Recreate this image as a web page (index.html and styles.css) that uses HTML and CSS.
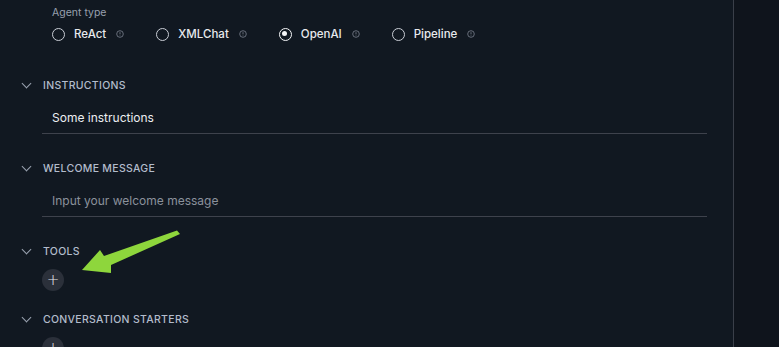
FILE: index.html
```html
<!DOCTYPE html>
<html lang="en">
  <head>
    <meta charset="UTF-8" />
    <meta name="viewport" content="width=device-width, initial-scale=1.0" />
    <title>Agent config</title>
    <link rel="stylesheet" href="styles.css">
  </head>

  <body>
    <div class="page">
      <main class="config">
        <div class="agent-type">
          <p class="field-label">Agent type</p>
          <div class="radios">
            <label class="radio">
              <span class="dot"></span>
              <span class="radio-name">ReAct</span>
              <svg class="info" viewBox="0 0 8 8"><circle cx="4" cy="4" r="3.3" /><line x1="4" y1="2.2" x2="4" y2="4.4" /><line x1="4" y1="5.3" x2="4" y2="5.8" /></svg>
            </label>
            <label class="radio">
              <span class="dot"></span>
              <span class="radio-name">XMLChat</span>
              <svg class="info" viewBox="0 0 8 8"><circle cx="4" cy="4" r="3.3" /><line x1="4" y1="2.2" x2="4" y2="4.4" /><line x1="4" y1="5.3" x2="4" y2="5.8" /></svg>
            </label>
            <label class="radio checked">
              <span class="dot"></span>
              <span class="radio-name">OpenAI</span>
              <svg class="info" viewBox="0 0 8 8"><circle cx="4" cy="4" r="3.3" /><line x1="4" y1="2.2" x2="4" y2="4.4" /><line x1="4" y1="5.3" x2="4" y2="5.8" /></svg>
            </label>
            <label class="radio">
              <span class="dot"></span>
              <span class="radio-name">Pipeline</span>
              <svg class="info" viewBox="0 0 8 8"><circle cx="4" cy="4" r="3.3" /><line x1="4" y1="2.2" x2="4" y2="4.4" /><line x1="4" y1="5.3" x2="4" y2="5.8" /></svg>
            </label>
          </div>
        </div>

        <section class="block">
          <h3 class="block-head"><span class="chev"></span>Instructions</h3>
          <div class="input">Some instructions</div>
        </section>

        <section class="block">
          <h3 class="block-head"><span class="chev"></span>Welcome message</h3>
          <div class="input placeholder">Input your welcome message</div>
        </section>

        <section class="block">
          <h3 class="block-head"><span class="chev"></span>Tools</h3>
          <button class="add">+</button>
        </section>

        <section class="block last">
          <h3 class="block-head"><span class="chev"></span>Conversation starters</h3>
          <button class="add">+</button>
        </section>

        <!-- annotation arrow drawn over the form -->
        <svg class="arrow" viewBox="0 0 200 300" width="200" height="300">
          <polygon points="82,270 100,250 104,256 177,230.5 180,234 111,265 111,273" />
        </svg>
      </main>

      <aside class="side"></aside>
    </div>
  </body>
</html>
```

FILE: styles.css
```css
body {
  margin: 0;
  padding: 0;
  background-color: #111821;
  font-family: Inter, "Noto Sans", sans-serif;
  overflow: hidden;
}

.page {
  display: flex;
  height: 347px;
}

.config {
  position: relative;
  width: 733px;
  padding: 6px 26px 0 21px;
  box-sizing: border-box;
}

.side {
  flex: 1;
  border-left: 1px solid #3a3f49;
  background-color: #0f141c;
}

.agent-type {
  padding-left: 31px;
}

.field-label {
  margin: 0;
  font-size: 10.5px;
  line-height: 14px;
  color: #98a0ae;
}

.radios {
  display: flex;
  gap: 32px;
  margin-top: 4px;
  height: 20px;
  align-items: center;
}

.radio {
  display: flex;
  align-items: center;
  color: #e8eaee;
  font-size: 11.5px;
  font-weight: 500;
}

.dot {
  width: 13px;
  height: 13px;
  border: 1.5px solid #c9cdd5;
  border-radius: 50%;
  box-sizing: border-box;
  margin-right: 9px;
  position: relative;
}

.checked .dot {
  border-color: #f4f5f7;
}

.checked .dot::after {
  content: "";
  position: absolute;
  left: 2.5px;
  top: 2.5px;
  width: 5px;
  height: 5px;
  border-radius: 50%;
  background-color: #f4f5f7;
}

.info {
  width: 8px;
  height: 8px;
  margin-left: 10px;
  fill: none;
  stroke: #7c8391;
  stroke-width: 0.8;
}

.block {
  margin-top: 33px;
}

.block + .block {
  margin-top: 26px;
}

.block + .last {
  margin-top: 20px;
}

.block-head {
  display: flex;
  align-items: center;
  gap: 11px;
  margin: 0;
  height: 16px;
  font-size: 10.5px;
  font-weight: 500;
  letter-spacing: 0.3px;
  text-transform: uppercase;
  color: #b3bccc;
}

.chev {
  width: 6px;
  height: 6px;
  border-right: 1.3px solid #9aa2b0;
  border-bottom: 1.3px solid #9aa2b0;
  transform: rotate(45deg);
  margin: -4px 2px 0 2px;
}

.input {
  margin: 9px 0 0 21px;
  padding: 8px 10px 7px;
  line-height: 16px;
  font-size: 12px;
  color: #eceef1;
  border-bottom: 1px solid #3e424c;
}

.placeholder {
  color: #8b919c;
}

.add {
  display: block;
  margin: 10px 0 0 21px;
  width: 22px;
  height: 22px;
  padding: 0;
  border: none;
  border-radius: 50%;
  background-color: #2b303a;
  color: #e6e8ec;
  font-family: "DejaVu Sans", sans-serif;
  font-size: 15px;
  font-weight: 300;
  line-height: 22px;
}

.arrow {
  position: absolute;
  left: 0;
  top: 0;
  fill: #8ed63c;
}
```
